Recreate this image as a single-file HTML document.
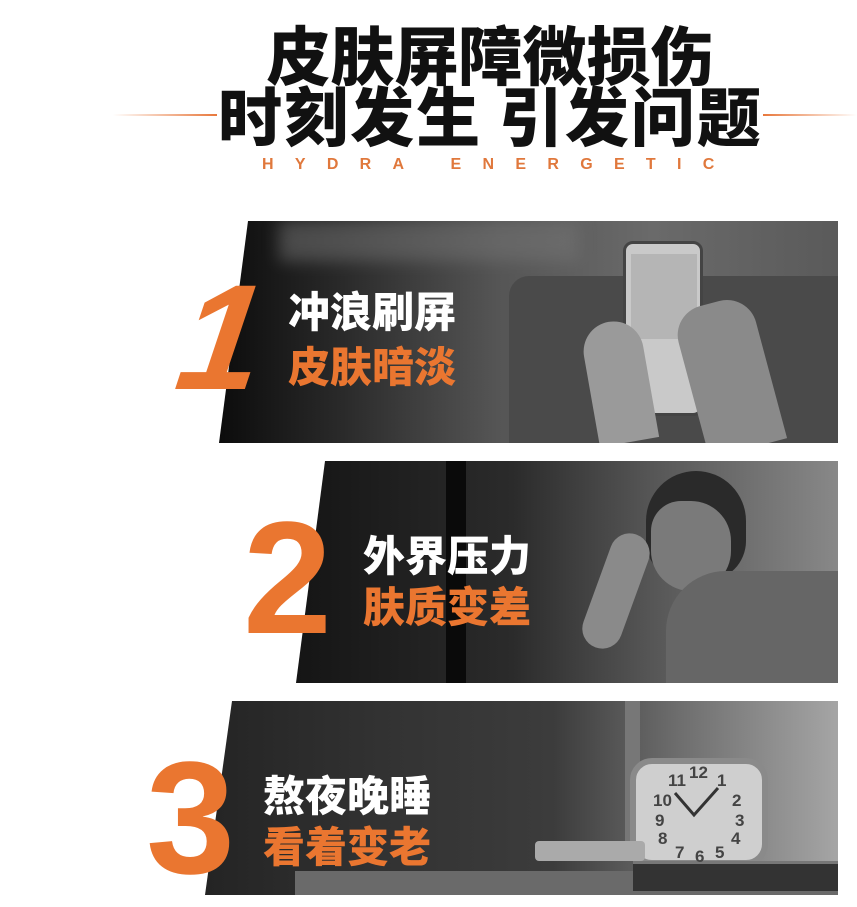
<!DOCTYPE html>
<html><head><meta charset="utf-8"><style>
*{margin:0;padding:0;box-sizing:border-box}
body{width:857px;height:895px;background:#fff;position:relative;overflow:hidden;font-family:"Liberation Sans","Noto Sans CJK SC",sans-serif}
.t{position:absolute;left:62px;width:857px;text-align:center;font-weight:900;color:#111;font-size:64px;line-height:64px;font-family:"Noto Sans CJK SC",sans-serif;white-space:nowrap}
.line{position:absolute;top:114px;height:2px}
.sub{position:absolute;top:156px;left:262px;color:#e0783c;font-size:16px;letter-spacing:21.3px;font-weight:bold;white-space:nowrap}
.p{position:absolute;overflow:hidden}
.num{position:absolute;color:#ea7630;font-weight:900;font-family:"Liberation Sans",sans-serif}
.w{position:absolute;color:#fff;font-weight:900;font-size:42px;line-height:46px;font-family:"Noto Sans CJK SC",sans-serif;white-space:nowrap}
.o{color:#ea7630}
</style></head><body>
<div class="t" style="top:21px">皮肤屏障微损伤</div>
<div class="t" style="top:82px;letter-spacing:2px">时刻发生 引发问题</div>
<div class="line" style="left:113px;width:104px;background:linear-gradient(90deg,rgba(232,120,60,0),#e8783c)"></div>
<div class="line" style="left:763px;width:94px;background:linear-gradient(90deg,#e8783c,rgba(232,120,60,0))"></div>
<div class="sub">HYDRA ENERGETIC</div>

<div class="p" style="left:219px;top:221px;width:619px;height:222px;clip-path:polygon(29px 0,619px 0,619px 222px,0 222px);background:linear-gradient(90deg,#0c0c0c 0%,#2a2a2a 20%,#555 45%,#6a6a6a 70%,#5a5a5a 100%)">
 <div style="position:absolute;left:60px;top:0;width:300px;height:40px;background:#777;opacity:.5;filter:blur(8px)"></div>
 <div style="position:absolute;left:290px;top:55px;width:330px;height:170px;background:#4a4a4a;border-radius:20px 0 0 0"></div>
 <div style="position:absolute;left:404px;top:20px;width:80px;height:175px;background:#c9c9c9;border:3px solid #444;border-radius:10px"></div>
 <div style="position:absolute;left:412px;top:33px;width:66px;height:85px;background:#b5b5b5"></div>
 <div style="position:absolute;left:370px;top:100px;width:60px;height:122px;background:#9a9a9a;border-radius:30px 30px 0 0;transform:rotate(-10deg)"></div>
 <div style="position:absolute;left:470px;top:80px;width:80px;height:150px;background:#8a8a8a;border-radius:30px 30px 0 0;transform:rotate(-15deg)"></div>
</div>
<div class="num" style="left:180px;top:262px;font-size:150px;line-height:150px;font-style:italic;transform:skewX(-8deg)">1</div>
<div class="w" style="left:288px;top:287px">冲浪刷屏</div>
<div class="w o" style="left:288px;top:342px">皮肤暗淡</div>

<div class="p" style="left:296px;top:461px;width:542px;height:222px;clip-path:polygon(29px 0,542px 0,542px 222px,0 222px);background:linear-gradient(90deg,#151515 0%,#2b2b2b 40%,#555 65%,#888 100%)">
 <div style="position:absolute;left:150px;top:0;width:20px;height:222px;background:#0a0a0a"></div>
 <div style="position:absolute;left:350px;top:10px;width:100px;height:110px;background:#2a2a2a;border-radius:50px 50px 40px 40px"></div>
 <div style="position:absolute;left:355px;top:40px;width:80px;height:90px;background:#7a7a7a;border-radius:30px 40px 40px 40px"></div>
 <div style="position:absolute;left:370px;top:110px;width:180px;height:120px;background:#666;border-radius:60px 0 0 0"></div>
 <div style="position:absolute;left:300px;top:70px;width:40px;height:120px;background:#8a8a8a;border-radius:20px;transform:rotate(20deg)"></div>
</div>
<div class="num" style="left:243px;top:498px;font-size:160px;line-height:160px">2</div>
<div class="w" style="left:363px;top:531px">外界压力</div>
<div class="w o" style="left:363px;top:582px">肤质变差</div>

<div class="p" style="left:205px;top:701px;width:633px;height:194px;clip-path:polygon(27px 0,633px 0,633px 194px,0 194px);background:linear-gradient(90deg,#242424 0%,#333 30%,#3c3c3c 55%,#6e6e6e 75%,#a5a5a5 100%)">
 <div style="position:absolute;left:420px;top:0;width:15px;height:160px;background:#777"></div>
 <div style="position:absolute;left:90px;top:170px;width:545px;height:30px;background:#6a6a6a"></div>
 <div style="position:absolute;left:425px;top:57px;width:138px;height:108px;background:#cfcfcf;border:6px solid #8a8a8a;border-radius:22px"></div>
 <div style="position:absolute;left:330px;top:140px;width:110px;height:20px;background:#aaa;border-radius:4px"></div>
 <div style="position:absolute;left:428px;top:160px;width:207px;height:30px;background:#333;border-top:3px solid #777"></div>
 <div style="position:absolute;left:448px;top:62px;width:100px;height:100px;color:#444;font:bold 17px 'Liberation Sans',sans-serif">
  <span style="position:absolute;left:36px;top:0">12</span><span style="position:absolute;left:15px;top:8px">11</span><span style="position:absolute;left:64px;top:8px">1</span>
  <span style="position:absolute;left:0;top:28px">10</span><span style="position:absolute;left:79px;top:28px">2</span>
  <span style="position:absolute;left:2px;top:48px">9</span><span style="position:absolute;left:82px;top:48px">3</span>
  <span style="position:absolute;left:5px;top:66px">8</span><span style="position:absolute;left:78px;top:66px">4</span>
  <span style="position:absolute;left:22px;top:80px">7</span><span style="position:absolute;left:42px;top:84px">6</span><span style="position:absolute;left:62px;top:80px">5</span>
 </div>
 <svg style="position:absolute;left:448px;top:62px" width="100" height="100"><path d="M22 30 L41 52 L65 25" stroke="#333" stroke-width="3" fill="none"/></svg>
</div>
<div class="num" style="left:146px;top:738px;font-size:160px;line-height:160px">3</div>
<div class="w" style="left:263px;top:771px">熬夜晚睡</div>
<div class="w o" style="left:263px;top:822px">看着变老</div>
</body></html>
